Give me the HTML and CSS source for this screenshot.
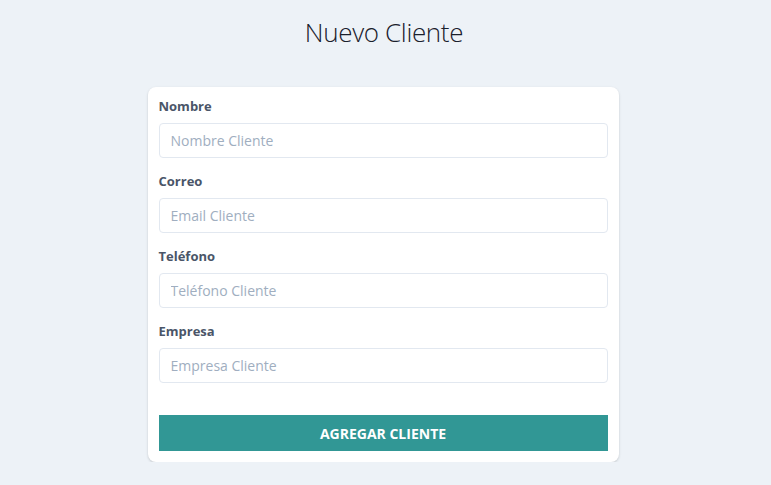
FILE: index.html
```html
<!DOCTYPE html>
<html lang="es">
<head>
<meta charset="utf-8">
<title>Nuevo Cliente</title>
<link rel="stylesheet" href="styles.css">
</head>
<body>
<main class="page">
  <h1 class="title">Nuevo Cliente</h1>
  <form class="card">
    <div class="field">
      <label class="label" for="nombre">Nombre</label>
      <input class="input" id="nombre" type="text" placeholder="Nombre Cliente">
    </div>
    <div class="field">
      <label class="label" for="correo">Correo</label>
      <input class="input" id="correo" type="email" placeholder="Email Cliente">
    </div>
    <div class="field">
      <label class="label" for="telefono">Teléfono</label>
      <input class="input" id="telefono" type="tel" placeholder="Teléfono Cliente">
    </div>
    <div class="field">
      <label class="label" for="empresa">Empresa</label>
      <input class="input" id="empresa" type="text" placeholder="Empresa Cliente">
    </div>
    <button class="button" type="button">Agregar Cliente</button>
  </form>
</main>
</body>
</html>
```
FILE: styles.css
```css
* { box-sizing: border-box; }
html, body { margin: 0; padding: 0; }
body {
  background: #edf2f7;
  font-family: "Open Sans", "Noto Sans", sans-serif;
  color: #1a202c;
}
.page {
  display: flex;
  flex-direction: column;
  align-items: center;
  padding-top: 13px;
}
.title {
  margin: 0 0 0 -3px;
  font-size: 26px;
  font-weight: 300;
  line-height: 38px;
  color: #1a202c;
  letter-spacing: -0.35px;
}
.card {
  margin-top: 36px;
  margin-left: -5px;
  width: 471px;
  background: #fff;
  border-radius: 8px;
  box-shadow: 0 1px 3px rgba(0,0,0,0.12), 0 1px 2px rgba(0,0,0,0.06);
  padding: 9px 11px 11px;
  display: flex;
  flex-direction: column;
  gap: 13px;
}
.field {
  display: flex;
  flex-direction: column;
  gap: 7px;
}
.label {
  font-size: 13px;
  font-weight: 700;
  line-height: 20px;
  color: #4a5568;
}
.input {
  height: 35px;
  border: 1px solid #e2e8f0;
  border-radius: 4px;
  padding: 0 11px;
  font-family: inherit;
  font-size: 14px;
  color: #4a5568;
  background: #fff;
  outline: none;
}
.input::placeholder { color: #a0aec0; }
.button {
  margin-top: 19px;
  height: 36px;
  border: none;
  background: #319795;
  color: #fff;
  font-family: inherit;
  font-size: 14px;
  font-weight: 700;
  text-transform: uppercase;
  letter-spacing: 0;
}
```
